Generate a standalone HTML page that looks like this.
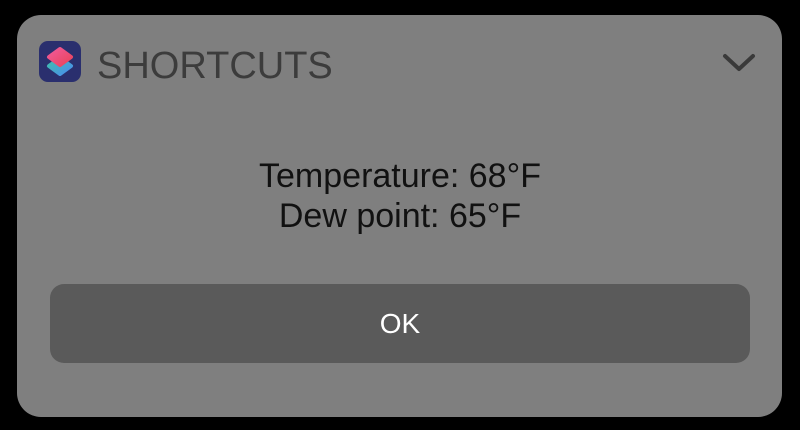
<!DOCTYPE html>
<html><head><style>
body{margin:0;width:800px;height:430px;background:#000;position:relative;overflow:hidden;font-family:"Liberation Sans",sans-serif}
.card{position:absolute;left:17px;top:15px;width:765px;height:402px;background:#7f7f7f;border-radius:24px}
.icon{position:absolute;left:39px;top:41px;width:42px;height:41px;border-radius:9px;background:#2a2f6e}
.title{position:absolute;left:97px;top:44px;font-size:38px;color:#3c3c3c;line-height:44px}
.msg{position:absolute;left:0;width:800px;text-align:center;font-size:34px;color:#111;line-height:40px;top:156px}
.btn{position:absolute;left:50px;top:284px;width:700px;height:79px;background:#5a5a5a;border-radius:14px}
.ok{position:absolute;left:0;width:800px;text-align:center;top:307px;font-size:28px;color:#fff;line-height:34px}
</style></head><body>
<div class="card"></div>
<div class="icon"><svg width="42" height="41" viewBox="0 0 42 41">
<defs><linearGradient id="a" x1="0" y1="0" x2="1" y2="1"><stop offset="0" stop-color="#f05a9a"/><stop offset="1" stop-color="#e9435a"/></linearGradient>
<linearGradient id="b" x1="0" y1="0" x2="1" y2="1"><stop offset="0" stop-color="#3fc0a8"/><stop offset="1" stop-color="#4a8cf0"/></linearGradient></defs>
<path d="M21 17 L32 25 L21 33 L10 25 Z" fill="url(#b)" stroke="url(#b)" stroke-width="4" stroke-linejoin="round"/>
<path d="M21 8 L32 16 L21 24 L10 16 Z" fill="url(#a)" stroke="url(#a)" stroke-width="4" stroke-linejoin="round"/>
</svg></div>
<div class="title">SHORTCUTS</div>
<svg style="position:absolute;left:720px;top:50px" width="40" height="28" viewBox="0 0 40 28"><path d="M5 6 L19 19 L33 6" fill="none" stroke="#3a3a3a" stroke-width="4" stroke-linecap="round" stroke-linejoin="round"/></svg>
<div class="msg">Temperature: 68°F<br>Dew point: 65°F</div>
<div class="btn"></div>
<div class="ok">OK</div>
</body></html>
